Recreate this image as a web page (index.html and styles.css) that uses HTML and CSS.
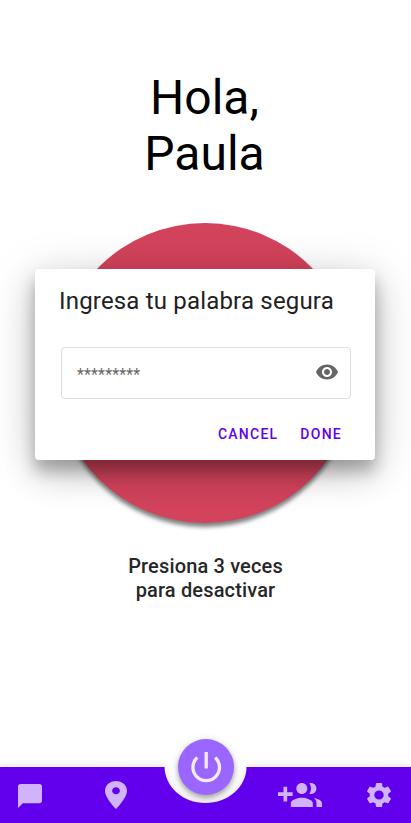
FILE: index.html
```html
<!DOCTYPE html>
<html lang="es">
<head>
<meta charset="utf-8">
<title>Hola, Paula</title>
<link rel="stylesheet" href="styles.css">
</head>
<body>
<div class="screen">
  <main class="content">
    <h1 class="greeting">Hola,<br>Paula</h1>
    <div class="alert-button"></div>
    <p class="hint">Presiona 3 veces<br>para desactivar</p>
  </main>

  <nav class="nav">
    <svg class="nav-shape" viewBox="0 0 411 56"><path d="M0 0H164.500C165 20 183 36 205.500 36S246.500 20 246.500 0H411V56H0Z"/></svg>
    <svg class="icon chat" viewBox="2 2 20 20"><path d="M20 2H4c-1.100 0-1.990.900-1.990 2L2 22l4-4h14c1.100 0 2-.900 2-2V4c0-1.100-.900-2-2-2z"/></svg>
    <svg class="icon place" viewBox="5 2 14 20" preserveAspectRatio="none"><path d="M12 2C8.130 2 5 5.130 5 9c0 5.250 7 13 7 13s7-7.750 7-13c0-3.870-3.130-7-7-7zm0 9.500c-1.380 0-2.500-1.120-2.500-2.500s1.120-2.500 2.500-2.500 2.500 1.120 2.500 2.500-1.120 2.500-2.500 2.500z"/></svg>
    <svg class="icon group" viewBox="0 5 24 13" preserveAspectRatio="none"><path d="M8 10H5V7H3v3H0v2h3v3h2v-3h3v-2zm10 1c1.660 0 2.990-1.340 2.990-3S19.660 5 18 5c-.320 0-.630.050-.910.140.570.810.900 1.790.900 2.860s-.340 2.040-.900 2.860c.280.090.590.140.910.140zm-5 0c1.660 0 2.990-1.340 2.990-3S14.660 5 13 5c-1.660 0-3 1.340-3 3s1.340 3 3 3zm6.620 2.160c.830.730 1.380 1.660 1.380 2.840v2h3v-2c0-1.540-2.370-2.490-4.380-2.840zM13 13c-2 0-6 1-6 3v2h12v-2c0-2-4-3-6-3z"/></svg>
    <svg class="icon gear" viewBox="2.270 2 19.460 20" preserveAspectRatio="none"><path d="M19.430 12.980c.040-.320.070-.640.070-.980s-.030-.660-.070-.980l2.110-1.650c.190-.150.240-.420.120-.640l-2-3.460c-.120-.220-.390-.300-.610-.220l-2.490 1c-.520-.400-1.080-.730-1.690-.980l-.380-2.650C14.460 2.180 14.250 2 14 2h-4c-.250 0-.460.180-.490.420l-.380 2.650c-.610.250-1.170.590-1.690.980l-2.490-1c-.230-.090-.490 0-.610.220l-2 3.460c-.130.220-.070.490.120.640l2.110 1.650c-.040.320-.070.650-.070.980s.030.660.070.980l-2.110 1.650c-.190.150-.240.420-.120.640l2 3.460c.120.220.390.300.610.220l2.490-1c.520.400 1.080.730 1.690.980l.380 2.650c.030.240.240.420.490.420h4c.250 0 .460-.180.490-.420l.380-2.650c.610-.250 1.170-.590 1.690-.980l2.490 1c.230.090.490 0 .610-.220l2-3.460c.120-.220.070-.490-.120-.640l-2.110-1.650zM12 15.800a3.800 3.800 0 1 1 0-7.600 3.800 3.800 0 0 1 0 7.600z"/></svg>
    <div class="fab">
      <svg viewBox="0 0 56 56"><path d="M19.200 18.500A13.300 13.300 0 1 0 37.200 18.500M28.200 13V29.500"/></svg>
    </div>
  </nav>

  <section class="dialog">
    <h2 class="dialog-title">Ingresa tu palabra segura</h2>
    <div class="field">
      <span class="value">*********</span>
      <svg class="eye" viewBox="0 0 24 24"><path d="M12 4.500C7 4.500 2.730 7.610 1 12c1.730 4.390 6 7.500 11 7.500s9.270-3.110 11-7.500c-1.730-4.390-6-7.500-11-7.500zM12 17c-2.760 0-5-2.240-5-5s2.240-5 5-5 5 2.240 5 5-2.240 5-5 5zm0-8c-1.660 0-3 1.340-3 3s1.340 3 3 3 3-1.340 3-3-1.340-3-3-3z"/></svg>
    </div>
    <div class="actions"><span>CANCEL</span><span>DONE</span></div>
  </section>
</div>
</body>
</html>
```
FILE: styles.css
```css
* { box-sizing: border-box; }
body { margin: 0; background: #fff; font-family: Roboto, "Liberation Sans", sans-serif; }
.screen {
  position: relative;
  display: flex;
  flex-direction: column;
  width: 411px;
  height: 823px;
  overflow: hidden;
}
.content {
  flex: 1;
  display: flex;
  flex-direction: column;
  align-items: center;
  padding-top: 70px;
}
.greeting {
  margin: 0 2px 0 0;
  font-size: 48px;
  line-height: 56px;
  font-weight: 400;
  text-align: center;
  color: #000;
}
.alert-button {
  width: 300px;
  height: 300px;
  margin: 41px 1px 0 0;
  border-radius: 50%;
  background: #d3435c;
  box-shadow: 0 4px 4px rgba(0, 0, 0, .5);
}
.hint {
  margin: 31px 0 0;
  font-size: 20px;
  line-height: 24px;
  font-weight: 500;
  letter-spacing: .15px;
  text-align: center;
  color: #272727;
}
.nav {
  position: relative;
  display: flex;
  align-items: center;
  height: 56px;
  padding: 0 20px 0 18px;
}
.nav-shape {
  position: absolute;
  inset: 0;
  width: 411px;
  height: 56px;
  fill: #6200ee;
  overflow: visible;
  filter: drop-shadow(0 0 4px rgba(0, 0, 0, .14));
}
.icon { position: relative; flex: none; fill: #d0b3fa; }
.chat { width: 24px; height: 24px; margin-top: 2px; }
.place { width: 22px; height: 28px; margin-left: 63px; }
.group { width: 44px; height: 24px; margin-left: 151px; }
.gear { width: 24px; height: 24px; margin-left: auto; }
.fab {
  position: absolute;
  left: 177.5px;
  top: -28px;
  width: 56px;
  height: 56px;
  border-radius: 50%;
  background: #9a66ff;
  box-shadow: 0 3px 5px rgba(0, 0, 0, .3), 0 1px 10px rgba(0, 0, 0, .12);
}
.fab svg { display: block; fill: none; stroke: #f3ecff; stroke-width: 3.3; }
.dialog {
  position: absolute;
  left: 35px;
  top: 269px;
  width: 340px;
  height: 191px;
  padding: 16px 24px 0 26px;
  border-radius: 4px;
  background: #fff;
  box-shadow: 0 11px 15px rgba(0, 0, 0, .24), 0 6px 50px rgba(0, 0, 0, .14), 0 14px 34px rgba(0, 0, 0, .16);
}
.dialog-title {
  margin: 0 0 0 -2px;
  font-size: 24px;
  line-height: 32px;
  font-weight: 400;
  letter-spacing: .18px;
  white-space: nowrap;
  color: #212121;
}
.field {
  display: flex;
  align-items: center;
  justify-content: space-between;
  height: 52px;
  margin-top: 30px;
  padding: 0 11px 0 15px;
  border: 1px solid #dedede;
  border-radius: 4px;
}
.value { padding-top: 4px; font-size: 16px; line-height: 24px; letter-spacing: .15px; color: #666; }
.eye { width: 24px; height: 24px; margin-bottom: 2px; fill: #666; }
.actions {
  display: flex;
  justify-content: flex-end;
  gap: 22px;
  margin-top: 27px;
  padding-right: 9px;
  font-size: 14px;
  line-height: 16px;
  font-weight: 500;
  letter-spacing: 1.25px;
  color: #6200ee;
}
```
